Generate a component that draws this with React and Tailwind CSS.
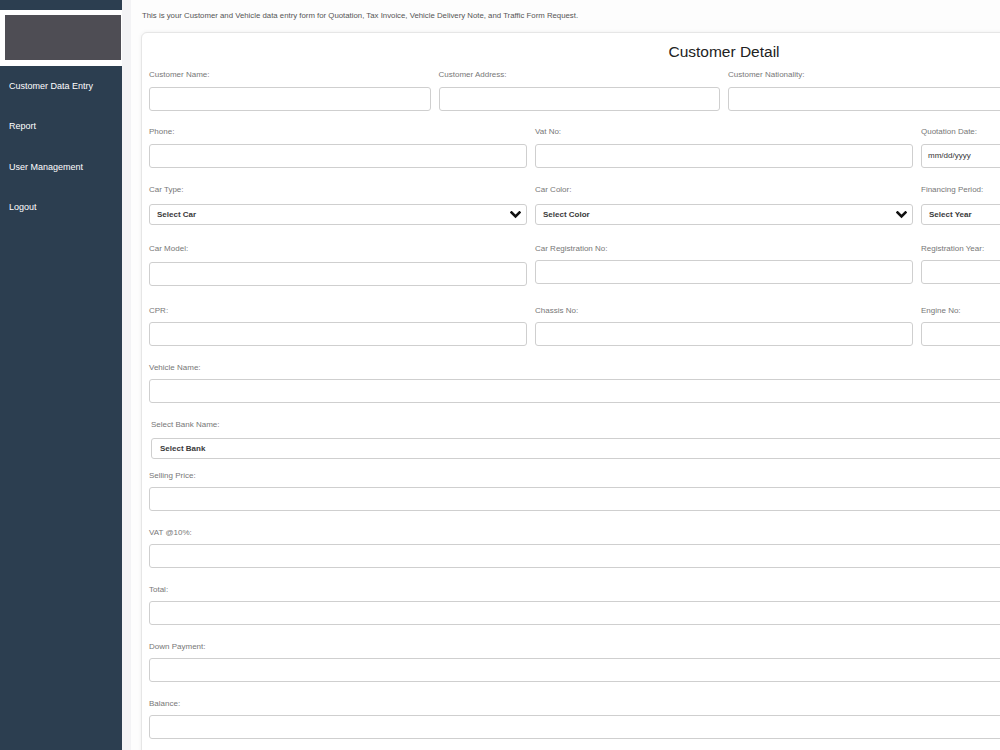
import React from "react";

const Label = ({ children, className = "" }) => (
  <div className={"text-[8px] leading-[10px] text-[#777] " + className}>{children}</div>
);

const Input = ({ className = "", children }) => (
  <div
    className={
      "h-[24px] rounded-[3px] border border-[#cfcfcf] bg-white flex items-center px-[6px] text-[8px] text-[#333] " +
      className
    }
  >
    {children}
  </div>
);

const Chevron = () => (
  <svg width="11" height="8" viewBox="0 0 11 8" className="shrink-0">
    <polyline points="1.5,1.5 5.5,5.5 9.5,1.5" fill="none" stroke="#111" strokeWidth="2.6" strokeLinecap="square" />
  </svg>
);

const Select = ({ text, chevron = true, className = "" }) => (
  <div
    className={
      "h-[21px] rounded-[3px] border border-[#cfcfcf] bg-white flex items-center justify-between pl-[7px] pr-[5px] text-[8px] font-semibold text-[#3a3a3a] " +
      className
    }
  >
    <span>{text}</span>
    {chevron && <Chevron />}
  </div>
);

const Field = ({ label, children, mb = "mb-[16px]", lmb = "mb-[8px]" }) => (
  <div className={mb}>
    <Label className={lmb}>{label}</Label>
    {children}
  </div>
);

export default function App() {
  const nav = ["Customer Data Entry", "Report", "User Management", "Logout"];
  return (
    <div className="flex h-[750px] w-[1000px] overflow-hidden font-['Liberation_Sans',Arial,sans-serif]">
      <aside className="w-[122px] shrink-0 bg-[#2c3e50] flex flex-col">
        <div className="h-[10px]" />
        <div className="bg-white h-[56px] pl-[5px] pt-[5px]">
          <div className="bg-[#4e4d54] h-[45px] w-[116px]" />
        </div>
        <nav className="flex flex-col pt-[1px]">
          {nav.map((n, i) => (
            <div
              key={n}
              className={"flex items-center px-[9px] text-[9px] text-white " + (i === 2 ? "h-[41px]" : "h-[40px]")}
            >
              {n}
            </div>
          ))}
        </nav>
      </aside>
      <main className="flex-1 bg-[#f3f3f5] pl-[9px] min-w-0">
        <div className="h-full bg-[#fdfdfd] pl-[10px] pt-[11px]">
          <p className="text-[7.8px] leading-[10px] text-[#555] pl-[1px] whitespace-nowrap">
            This is your Customer and Vehicle data entry form for Quotation, Tax Invoice, Vehicle Delivery Note, and Traffic Form Request.
          </p>
          <div className="mt-[11px] w-[1166px] shrink-0 rounded-[6px] border border-[#e6e6e6] bg-white shadow-[0_0_4px_rgba(0,0,0,0.06)] px-[7px] pt-[10px] pb-[20px]">
            <h1 className="text-center text-[15.5px] leading-[18px] text-[#222] mb-[9px]">Customer Detail</h1>

            <div className="grid grid-cols-4 gap-x-[8px]">
              <Field label="Customer Name:" lmb="mb-[7px]"><Input /></Field>
              <Field label="Customer Address:" lmb="mb-[7px]"><Input /></Field>
              <Field label="Customer Nationality:" lmb="mb-[7px]"><Input /></Field>
              <Field label={"\u00a0"} lmb="mb-[7px]"><Input /></Field>
            </div>

            <div className="grid grid-cols-3 gap-x-[8px]">
              <Field label="Phone:" lmb="mb-[7px]" mb="mb-[17px]"><Input /></Field>
              <Field label="Vat No:" lmb="mb-[7px]" mb="mb-[17px]"><Input /></Field>
              <Field label="Quotation Date:" lmb="mb-[7px]" mb="mb-[17px]"><Input>mm/dd/yyyy</Input></Field>
            </div>

            <div className="grid grid-cols-3 gap-x-[8px]">
              <Field label="Car Type:" lmb="mb-[9px]" mb="mb-[19px]"><Select text="Select Car" /></Field>
              <Field label="Car Color:" lmb="mb-[9px]" mb="mb-[19px]"><Select text="Select Color" /></Field>
              <Field label="Financing Period:" lmb="mb-[9px]" mb="mb-[19px]"><Select text="Select Year" /></Field>
            </div>

            <div className="grid grid-cols-3 gap-x-[8px]">
              <Field label="Car Model:" lmb="mb-[8px]" mb="mb-[20px]"><Input /></Field>
              <div>
                <Label className="mb-[6px]">Car Registration No:</Label>
                <Input />
              </div>
              <div>
                <Label className="mb-[6px]">Registration Year:</Label>
                <Input />
              </div>
            </div>

            <div className="grid grid-cols-3 gap-x-[8px]">
              <Field label="CPR:" lmb="mb-[6px]" mb="mb-[17px]"><Input /></Field>
              <Field label="Chassis No:" lmb="mb-[6px]" mb="mb-[17px]"><Input /></Field>
              <Field label="Engine No:" lmb="mb-[6px]" mb="mb-[17px]"><Input /></Field>
            </div>

            <Field label="Vehicle Name:" lmb="mb-[6px]" mb="mb-[17px]"><Input /></Field>

            <div className="pl-[2px] mb-[12px]">
              <Label className="mb-[8px]">Select Bank Name:</Label>
              <Select text="Select Bank" chevron={false} className="pl-[8px]" />
            </div>

            <Field label="Selling Price:" lmb="mb-[6px]" mb="mb-[17px]"><Input /></Field>
            <Field label="VAT @10%:" lmb="mb-[6px]" mb="mb-[17px]"><Input /></Field>
            <Field label="Total:" lmb="mb-[6px]" mb="mb-[17px]"><Input /></Field>
            <Field label="Down Payment:" lmb="mb-[6px]" mb="mb-[17px]"><Input /></Field>
            <Field label="Balance:" lmb="mb-[6px]" mb="mb-[17px]"><Input /></Field>
          </div>
        </div>
      </main>
    </div>
  );
}
